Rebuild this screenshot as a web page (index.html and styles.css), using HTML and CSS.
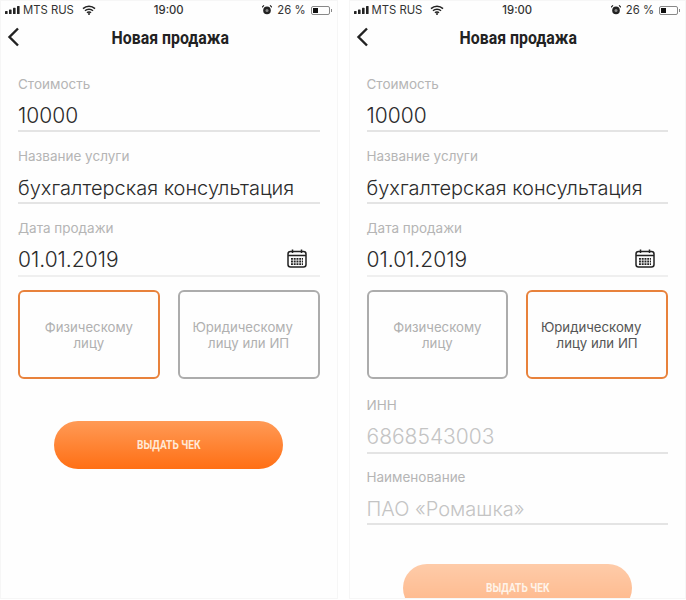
FILE: index.html
```html
<!DOCTYPE html>
<html lang="en">
<head>
  <meta charset="UTF-8" />
  <meta name="viewport" content="width=device-width, initial-scale=1.0" />
  <title>Новая продажа</title>
  <link rel="stylesheet" href="styles.css">
</head>
<body>
  <div class="screens">
    <!-- individual -->
    <section class="phone">
      <div class="status">
        <div class="status-left">
          <svg class="signal" width="15" height="8" viewBox="0 0 15 8"><rect x="0" y="5" width="2.6" height="3" rx=".6"/><rect x="4" y="3.5" width="2.6" height="4.5" rx=".6"/><rect x="8" y="1.8" width="2.6" height="6.2" rx=".6"/><rect x="12" y="0" width="2.6" height="8" rx=".6"/></svg>
          <span>MTS RUS</span>
          <svg class="wifi" width="14" height="10" viewBox="0 0 14 10"><path d="M1 3.6a8.6 8.6 0 0 1 12 0M3 5.8a5.7 5.7 0 0 1 8 0M5 7.8a2.8 2.8 0 0 1 4 0" fill="none" stroke="#222" stroke-width="1.5"/><circle cx="7" cy="9" r="1" fill="#222"/></svg>
        </div>
        <div class="status-time">19:00</div>
        <div class="status-right">
          <svg class="alarm" width="10" height="10" viewBox="0 0 10 10"><circle cx="5" cy="5.4" r="3.8" fill="#222"/><circle cx="5" cy="5.4" r="1.5" fill="#888"/><path d="M0 2.2 2 .4M10 2.2 8 .4" stroke="#222" stroke-width="1.2"/></svg>
          <span>26 %</span>
          <div class="battery"><div class="battery-fill"></div></div>
        </div>
      </div>
      <header class="topbar">
        <svg class="back" width="13" height="20" viewBox="0 0 13 20"><path d="M11 1.5 2.5 10l8.500 8.500" fill="none" stroke="#222" stroke-width="2.400"/></svg>
        <h1>Новая продажа</h1>
      </header>
      <div class="form">
        <div class="field"><label>Стоимость</label><div class="value value-num">10000</div></div>
        <div class="field"><label>Название услуги</label><div class="value">бухгалтерская консультация</div></div>
        <div class="field field-date">
          <label>Дата продажи</label>
          <div class="value value-num">01.01.2019</div>
          <svg class="calendar" width="20" height="19" viewBox="0 0 20 19"><rect x="1" y="2.500" width="18" height="15.500" rx="2.500" fill="none" stroke="#222" stroke-width="1.500"/><path d="M1 6.500h18M5.500 0.500v3.500M14.500 0.500v3.500" stroke="#222" stroke-width="1.500"/><path d="M4 9h12v1.800H4zM4 11.600h12v1.800H4zM4 14.200h12V16H4z" fill="#222"/><path d="M6.400 8.500v8M9.100 8.500v8M11.800 8.500v8M14.500 8.500v8" stroke="#fff" stroke-width=".8"/></svg>
        </div>
        <div class="choice">
          <div class="card card-on">Физическому<br>лицу</div>
          <div class="card"><div><span class="card-first">Юридическому</span><br>лицу или ИП</div></div>
        </div>
        <button class="issue"><span>ВЫДАТЬ ЧЕК</span></button>
      </div>
    </section>

    <!-- company -->
    <section class="phone">
      <div class="status">
        <div class="status-left">
          <svg class="signal" width="15" height="8" viewBox="0 0 15 8"><rect x="0" y="5" width="2.6" height="3" rx=".6"/><rect x="4" y="3.5" width="2.6" height="4.5" rx=".6"/><rect x="8" y="1.8" width="2.6" height="6.2" rx=".6"/><rect x="12" y="0" width="2.6" height="8" rx=".6"/></svg>
          <span>MTS RUS</span>
          <svg class="wifi" width="14" height="10" viewBox="0 0 14 10"><path d="M1 3.6a8.6 8.6 0 0 1 12 0M3 5.8a5.7 5.7 0 0 1 8 0M5 7.8a2.8 2.8 0 0 1 4 0" fill="none" stroke="#222" stroke-width="1.5"/><circle cx="7" cy="9" r="1" fill="#222"/></svg>
        </div>
        <div class="status-time">19:00</div>
        <div class="status-right">
          <svg class="alarm" width="10" height="10" viewBox="0 0 10 10"><circle cx="5" cy="5.4" r="3.8" fill="#222"/><circle cx="5" cy="5.4" r="1.5" fill="#888"/><path d="M0 2.2 2 .4M10 2.2 8 .4" stroke="#222" stroke-width="1.2"/></svg>
          <span>26 %</span>
          <div class="battery"><div class="battery-fill"></div></div>
        </div>
      </div>
      <header class="topbar">
        <svg class="back" width="13" height="20" viewBox="0 0 13 20"><path d="M11 1.5 2.5 10l8.500 8.500" fill="none" stroke="#222" stroke-width="2.400"/></svg>
        <h1>Новая продажа</h1>
      </header>
      <div class="form">
        <div class="field"><label>Стоимость</label><div class="value value-num">10000</div></div>
        <div class="field"><label>Название услуги</label><div class="value">бухгалтерская консультация</div></div>
        <div class="field field-date">
          <label>Дата продажи</label>
          <div class="value value-num">01.01.2019</div>
          <svg class="calendar" width="20" height="19" viewBox="0 0 20 19"><rect x="1" y="2.500" width="18" height="15.500" rx="2.500" fill="none" stroke="#222" stroke-width="1.500"/><path d="M1 6.500h18M5.500 0.500v3.500M14.500 0.500v3.500" stroke="#222" stroke-width="1.500"/><path d="M4 9h12v1.800H4zM4 11.600h12v1.800H4zM4 14.200h12V16H4z" fill="#222"/><path d="M6.400 8.500v8M9.100 8.500v8M11.800 8.500v8M14.500 8.500v8" stroke="#fff" stroke-width=".8"/></svg>
        </div>
        <div class="choice">
          <div class="card">Физическому<br>лицу</div>
          <div class="card card-on"><div><span class="card-first">Юридическому</span><br>лицу или ИП</div></div>
        </div>
        <div class="extra">
          <div class="field"><label>ИНН</label><div class="value value-num value-hint">6868543003</div></div>
          <div class="field"><label>Наименование</label><div class="value value-hint">ПАО «Ромашка»</div></div>
        </div>
        <button class="issue issue-off"><span>ВЫДАТЬ ЧЕК</span></button>
      </div>
    </section>
  </div>
</body>
</html>
```

FILE: styles.css
```css
html, body {
  margin: 0;
  height: 600px;
  overflow: hidden;
  background-color: #ffffff;
}

.screens {
  display: flex;
  gap: 11px;
  height: 600px;
  overflow: hidden;
  font-family: Inter, "Liberation Sans", sans-serif;
  color: #2b2b2b;
}

.phone {
  box-sizing: border-box;
  width: 338px;
  height: 599px;
  overflow: hidden;
  border: 1px solid #f6f6f6;
  background-color: #fefefe;
}

.status {
  display: grid;
  grid-template-columns: 1fr auto 1fr;
  align-items: center;
  height: 18px;
  padding: 0 7px;
  font-size: 11.300px;
  color: #333;
}

.status-left, .status-right {
  display: flex;
  align-items: center;
}

.status-left {
  gap: 3px;
  margin-left: -3px;
}

.status-left .wifi {
  margin-left: 5px;
}

.status-right {
  justify-content: flex-end;
  gap: 5px;
}

.signal {
  fill: #222;
}

.status-time {
  font-weight: 500;
}

.battery {
  position: relative;
  width: 19px;
  height: 9px;
  padding: 1px;
  border: 1px solid #888;
  border-radius: 2px;
  box-sizing: border-box;
}

.battery::after {
  content: "";
  position: absolute;
  right: -3px;
  top: 2px;
  width: 1px;
  height: 3px;
  background-color: #888;
}

.battery-fill {
  width: 5px;
  height: 100%;
  background-color: #111;
}

.topbar {
  position: relative;
  height: 36px;
  display: flex;
  align-items: center;
  justify-content: center;
  padding-left: 3px;
}

.back {
  position: absolute;
  left: 6px;
  top: 8px;
}

h1 {
  margin: 0;
  font-family: Roboto, sans-serif;
  font-size: 19px;
  font-weight: bold;
  color: #222;
  transform: scaleX(.835);
}

.form {
  padding: 19px 17px 0 17px;
}

.field {
  position: relative;
  height: 72px;
  box-sizing: border-box;
}

.field label {
  display: block;
  height: 20px;
  line-height: 20px;
  font-size: 13.500px;
  color: #b5b5b5;
}

.value {
  height: 38px;
  padding-top: 6px;
  box-sizing: border-box;
  line-height: 32px;
  font-size: 20px;
  font-weight: 300;
  border-bottom: 2px solid #e4e4e4;
  white-space: nowrap;
}

.value-num {
  font-size: 21px;
}

.value-hint {
  color: #c4c4c4;
}

.field-date .value {
  height: 39px;
  border-bottom-color: #efefef;
}

.calendar {
  position: absolute;
  right: 13px;
  top: 31px;
}

.choice {
  display: flex;
  gap: 18px;
}

.card {
  flex: 1;
  height: 89px;
  box-sizing: border-box;
  display: flex;
  align-items: center;
  justify-content: center;
  text-align: center;
  font-size: 13.200px;
  line-height: 16px;
  color: #b0b0b0;
  border: 2px solid #acacac;
  border-radius: 6px;
}

.card-first {
  display: inline-block;
  margin-right: 12px;
}

.card-on {
  border-color: #e8823c;
}

.phone:last-child .card-on {
  color: #555;
}

.issue {
  display: block;
  width: 229px;
  height: 48px;
  margin: 42px auto 0;
  padding: 0;
  border: none;
  border-radius: 24px;
  background: linear-gradient(#ff9a56, #ff6f14);
  font-family: Roboto, sans-serif;
  font-size: 12px;
  font-weight: bold;
  color: #ffe9d6;
}

.issue span {
  display: inline-block;
  transform: scaleX(.84);
}

.extra {
  margin-top: 16px;
}

.extra .field:first-child .value {
  height: 39px;
}

.issue-off {
  margin-top: 25px;
  opacity: .5;
}
```
